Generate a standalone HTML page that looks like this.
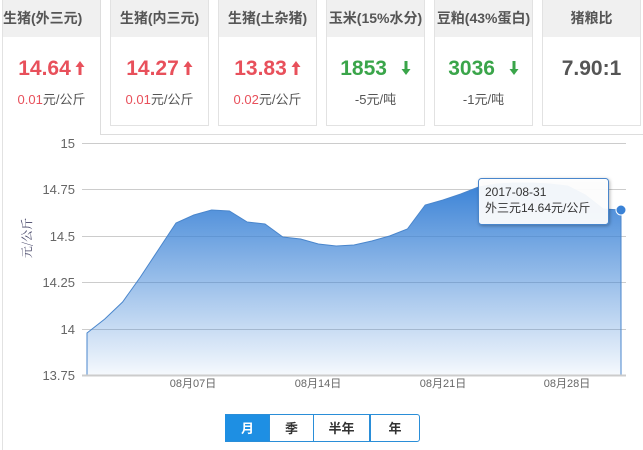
<!DOCTYPE html>
<html><head><meta charset="utf-8"><style>
*{margin:0;padding:0;box-sizing:border-box}
body{width:643px;height:450px;background:#fff;font-family:"Liberation Sans","Noto Sans CJK SC",sans-serif;position:relative;overflow:hidden}
.c{position:absolute;top:0;height:126px;border:1px solid #e2e2e2;border-top:none;background:#fff;text-align:center}
.h{height:37px;background:#f0f0f0;line-height:37px;font-size:14px;color:#555;font-weight:bold}
.v{margin-top:18px;font-size:21px;font-weight:bold;line-height:28px}
.r{color:#e8505b}.g{color:#3aa54a}
.s{font-size:13px;color:#555;margin-top:6px}
.s b{font-weight:normal;color:#e8505b}
.btn{position:absolute;top:414px;height:28px;line-height:27px;text-align:center;font-size:13px;color:#333;border:1px solid #2a8ed8;border-left:none;font-weight:bold}
svg.a{display:inline-block;vertical-align:-1px;margin-left:4px}
</style></head><body>
<div style="position:absolute;left:100px;top:0;width:1px;height:135px;background:#ddd"></div>
<div style="position:absolute;left:100px;top:134px;width:543px;height:1px;background:#ddd"></div>
<div style="position:absolute;left:2px;top:0;width:1px;height:450px;background:#e2e2e2"></div>
<div style="position:absolute;left:3px;top:0;width:97px;">
<div class="h">生猪(外三元)</div>
<div class="v r" style="text-align:center">14.64<svg class="a" width="10" height="16"><path d="M5 1 L9.5 7 L6.5 7 L6.5 15 L3.5 15 L3.5 7 L0.5 7 Z" fill="#e8505b"/></svg></div>
<div class="s" style="text-align:center"><b>0.01</b>元/公斤</div></div>
<div class="c" style="left:110px;width:99px"><div class="h">生猪(内三元)</div><div class="v r">14.27<svg class="a" width="10" height="16"><path d="M5 1 L9.5 7 L6.5 7 L6.5 15 L3.5 15 L3.5 7 L0.5 7 Z" fill="#e8505b"/></svg></div><div class="s"><b>0.01</b>元/公斤</div></div>
<div class="c" style="left:218px;width:99px"><div class="h">生猪(土杂猪)</div><div class="v r">13.83<svg class="a" width="10" height="16"><path d="M5 1 L9.5 7 L6.5 7 L6.5 15 L3.5 15 L3.5 7 L0.5 7 Z" fill="#e8505b"/></svg></div><div class="s"><b>0.02</b>元/公斤</div></div>
<div class="c" style="left:326px;width:99px"><div class="h">玉米(15%水分)</div><div class="v g">1853 <svg class="a" width="10" height="16" style="margin-left:8px"><path d="M5 15 L9.5 9 L6.5 9 L6.5 1 L3.5 1 L3.5 9 L0.5 9 Z" fill="#3aa54a"/></svg></div><div class="s">-5元/吨</div></div>
<div class="c" style="left:434px;width:99px"><div class="h">豆粕(43%蛋白)</div><div class="v g">3036 <svg class="a" width="10" height="16" style="margin-left:8px"><path d="M5 15 L9.5 9 L6.5 9 L6.5 1 L3.5 1 L3.5 9 L0.5 9 Z" fill="#3aa54a"/></svg></div><div class="s">-1元/吨</div></div>
<div class="c" style="left:542px;width:99px"><div class="h">猪粮比</div><div class="v" style="color:#555">7.90:1</div></div>
<svg width="643" height="450" style="position:absolute;left:0;top:0">
<defs><linearGradient id="gr" x1="0" y1="0" x2="0" y2="1"><stop offset="0" stop-color="#3a82d6"/><stop offset="1" stop-color="#3a82d6" stop-opacity="0.05"/></linearGradient>
<filter id="sh"><feDropShadow dx="1" dy="1" stdDeviation="1.5" flood-opacity="0.3"/></filter></defs>
<g stroke="#ccc" stroke-width="1">
<line x1="82" y1="143.5" x2="626" y2="143.5"/><line x1="82" y1="189.5" x2="626" y2="189.5"/><line x1="82" y1="236.5" x2="626" y2="236.5"/><line x1="82" y1="282.5" x2="626" y2="282.5"/><line x1="82" y1="329.5" x2="626" y2="329.5"/></g>
<path d="M87,333 L104.8,319 L122.6,302 L140.4,277 L158.2,250 L176,223 L193.8,215 L211.6,210 L229.4,211 L247.2,222 L265,224 L282.8,237 L300.6,239 L318.4,244 L336.2,246 L354,245 L371.8,241 L389.6,236 L407.4,229 L425.2,205 L443,200 L460.8,194 L478.6,187 L496.4,184 L514.2,183 L532,183 L549.8,184 L567.6,186 L585.4,195 L603.2,209 L621,210 L621,375 L87,375 Z" fill="url(#gr)" stroke="#4a86cc" stroke-width="1"/>
<line x1="82" y1="375.5" x2="626" y2="375.5" stroke="#ccc" stroke-width="2"/>
<circle cx="621" cy="210" r="5" fill="#3a82d6" stroke="#fff" stroke-width="1"/>
<g font-size="13" fill="#666" text-anchor="end" font-family="Liberation Sans,sans-serif">
<text x="75" y="148">15</text><text x="75" y="194">14.75</text><text x="75" y="241">14.5</text><text x="75" y="287">14.25</text><text x="75" y="334">14</text><text x="75" y="380">13.75</text></g>
<g font-size="11" fill="#666" text-anchor="middle">
<text x="193" y="387">08月07日</text><text x="318" y="387">08月14日</text><text x="443" y="387">08月21日</text><text x="567" y="387">08月28日</text></g>
<text transform="translate(31,238) rotate(-90)" font-size="12" fill="#446" text-anchor="middle" font-family="Noto Serif CJK SC,serif">元/公斤</text>
<rect x="478.5" y="178.5" width="130" height="46" rx="3" fill="#fff" fill-opacity="0.92" stroke="#4a86cc" filter="url(#sh)"/>
<text x="485" y="196" font-size="12" fill="#333">2017-08-31</text>
<text x="485" y="212" font-size="12" fill="#333">外三元14.64元/公斤</text>
</svg>
<div class="btn" style="left:225px;width:45px;background:#1e8fe3;color:#fff;border-left:1px solid #1e8fe3">月</div>
<div class="btn" style="left:270px;width:44px">季</div>
<div class="btn" style="left:313px;width:57px;border-left:1px solid #2a8ed8">半年</div>
<div class="btn" style="left:370px;width:50px;border-left:1px solid #2a8ed8;border-radius:0 3px 3px 0">年</div>
</body></html>
